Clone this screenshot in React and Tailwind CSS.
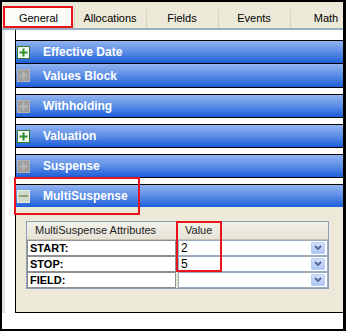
import React from "react";

const font = { fontFamily: '"Liberation Sans", Arial, sans-serif' };

function PlusIcon({ enabled }) {
  if (enabled) {
    return (
      <div className="w-[13px] h-[13px] border border-[#2e7d32] bg-[#f4f8f2] flex items-center justify-center shrink-0">
        <svg width="9" height="9" viewBox="0 0 9 9">
          <rect x="3.5" y="0.5" width="2" height="8" fill="#2f8f2f" />
          <rect x="0.5" y="3.5" width="8" height="2" fill="#2f8f2f" />
        </svg>
      </div>
    );
  }
  return (
    <div className="w-[13px] h-[13px] border border-[#b4b4b4] bg-[#9e9e9e] flex items-center justify-center shrink-0">
      <svg width="9" height="9" viewBox="0 0 9 9">
        <rect x="3.5" y="0.5" width="2" height="8" fill="#b8b8b8" />
        <rect x="0.5" y="3.5" width="8" height="2" fill="#b8b8b8" />
      </svg>
    </div>
  );
}

function MinusIcon() {
  return (
    <div className="w-[13px] h-[13px] border border-[#e4ebe0] bg-[#cfd8c9] flex items-center justify-center shrink-0">
      <div className="w-[9px] h-[2px] bg-[#8ea57c]" />
    </div>
  );
}

function Bar({ title, icon, cls }) {
  return (
    <div
      className={
        "flex items-center bg-gradient-to-b from-[#93b4ef] via-[#5a8de6] to-[#1d5dda] border-black " +
        cls
      }
    >
      <div className="ml-[1px]">{icon}</div>
      <span className="ml-[13px] text-white font-bold text-[12px] leading-none">{title}</span>
    </div>
  );
}

function Chevron() {
  return (
    <div className="w-[14px] h-[12px] mr-[2px] rounded-[1px] border border-[#b8ccf4] bg-gradient-to-b from-[#d3e0fd] to-[#aec5f6] flex items-center justify-center">
      <svg width="8" height="6" viewBox="0 0 8 6">
        <polyline points="1,1 4,4 7,1" fill="none" stroke="#4d6185" strokeWidth="1.8" />
      </svg>
    </div>
  );
}

function Row({ label, value }) {
  return (
    <div className="flex h-[16px] gap-[2px]">
      <div className="w-[149px] h-full border border-[#8f8f8f] bg-white flex items-center pl-[2px]">
        <span className="text-[11px] font-bold text-black leading-none">{label}</span>
      </div>
      <div className="flex-1 h-full border border-[#9aabc0] bg-white flex items-center justify-between pl-[2px]">
        <span className="text-[12px] text-black leading-none">{value}</span>
        <Chevron />
      </div>
    </div>
  );
}

export default function App() {
  const tabs = ["Allocations", "Fields", "Events", "Math"];
  return (
    <div style={font} className="relative w-[346px] h-[331px] bg-black pt-[2px] pl-[2px] pr-[3px] pb-[2px]">
      <div className="flex flex-col h-full bg-white overflow-hidden">
        {/* Tab strip */}
        <div className="h-[26px] bg-[#ece9d8] flex items-end pl-[2px] overflow-hidden shrink-0">
          <div className="w-[69px] h-[20px] bg-[#fbfbf8] flex items-center justify-center text-[11px] text-black shrink-0">
            General
          </div>
          {tabs.map((t) => (
            <div key={t} className="flex items-end shrink-0">
              <div className="w-[1px] h-[19px] bg-[#d6d3c4] ml-[1px]" />
              <div className="w-[70px] h-[20px] flex items-center justify-center text-[11px] text-black">{t}</div>
            </div>
          ))}
        </div>
        <div className="h-[2px] bg-[#98adbd] shrink-0" />

        {/* Panel row */}
        <div className="flex h-[283px] shrink-0">
          <div className="w-[13px] bg-white flex">
            <div className="w-[3px] bg-[#e2e2e2]" />
          </div>
          <div className="flex-1 border-l border-b border-black flex flex-col">
            <div className="h-[10px] bg-white shrink-0" />
            <Bar title="Effective Date" icon={<PlusIcon enabled />} cls="h-[24px] border-y shrink-0" />
            <Bar title="Values Block" icon={<PlusIcon />} cls="h-[24px] border-b shrink-0" />
            <div className="h-[6px] shrink-0" />
            <Bar title="Withholding" icon={<PlusIcon />} cls="h-[24px] border-y shrink-0" />
            <div className="h-[6px] shrink-0" />
            <Bar title="Valuation" icon={<PlusIcon enabled />} cls="h-[24px] border-y shrink-0" />
            <div className="h-[6px] shrink-0" />
            <Bar title="Suspense" icon={<PlusIcon />} cls="h-[24px] border-y shrink-0" />
            <div className="h-[6px] shrink-0" />
            <Bar title="MultiSuspense" icon={<MinusIcon />} cls="h-[23px] border-t shrink-0" />
            <div className="flex-1 bg-[#ece9d8] pt-[14px] pl-[10px] pr-[14px]">
              <div className="border border-[#8d9fb5] bg-[#e9e7dc]">
                <div className="flex h-[18px] border-b border-[#c7c3b3] bg-gradient-to-b from-[#f2f1ea] to-[#e6e3d6]">
                  <div className="w-[150px] border-r border-[#c7c3b3] flex items-center pl-[8px] text-[11px] text-[#222]">
                    MultiSuspense Attributes
                  </div>
                  <div className="flex-1 flex items-center pl-[8px] text-[11px] text-[#222]">Value</div>
                </div>
                <Row label="START:" value="2" />
                <Row label="STOP:" value="5" />
                <Row label="FIELD:" value="" />
              </div>
            </div>
          </div>
        </div>
        <div className="flex-1 bg-white" />
      </div>

      {/* Red annotation boxes */}
      <div className="absolute left-[3px] top-[6px] w-[70px] h-[22px] border-2 border-[#e8141b]" />
      <div className="absolute left-[14px] top-[177px] w-[126px] h-[38px] border-2 border-[#e8141b]" />
      <div className="absolute left-[176px] top-[221px] w-[46px] h-[51px] border-2 border-[#e8141b]" />
    </div>
  );
}
